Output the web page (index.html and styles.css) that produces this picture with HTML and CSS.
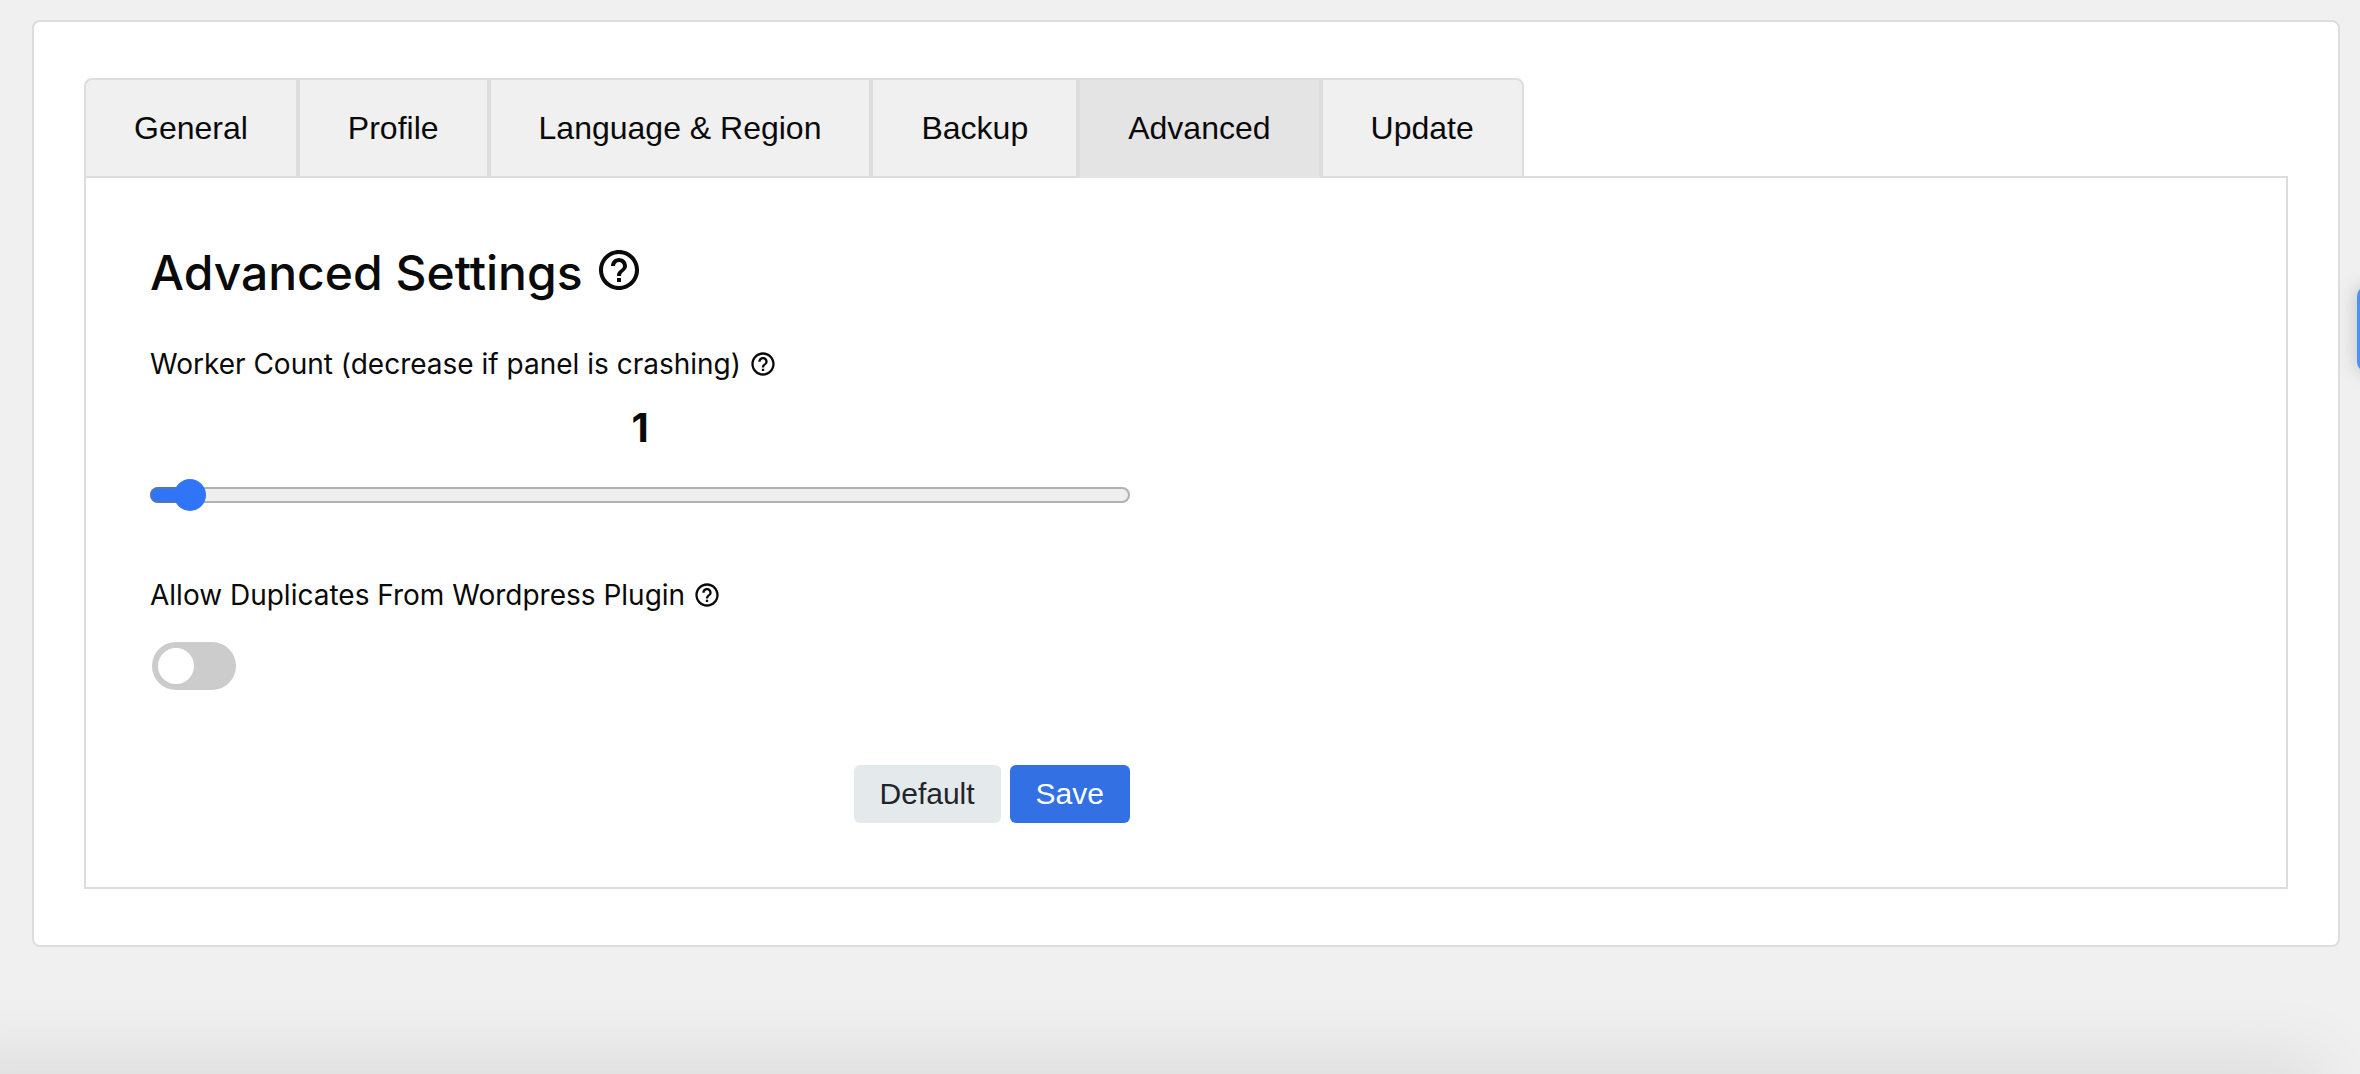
FILE: index.html
```html
<!DOCTYPE html>
<html lang="en">
<head>
<meta charset="utf-8">
<title>Advanced Settings</title>
<link rel="stylesheet" href="styles.css">
</head>
<body>
<svg class="sprite" aria-hidden="true">
  <symbol id="help" viewBox="0 0 24 24">
    <path d="M11 18h2v-2h-2v2zm1-16C6.480 2 2 6.480 2 12s4.480 10 10 10 10-4.480 10-10S17.520 2 12 2zm0 18c-4.410 0-8-3.590-8-8s3.590-8 8-8 8 3.590 8 8-3.590 8-8 8zm0-14c-2.210 0-4 1.790-4 4h2c0-1.100.9-2 2-2s2 .9 2 2c0 2-3 1.750-3 5h2c0-2.250 3-2.500 3-5 0-2.210-1.790-4-4-4z"/>
  </symbol>
</svg>
<main class="card">
  <nav class="tabs">
    <button class="tab" type="button">General</button>
    <button class="tab" type="button">Profile</button>
    <button class="tab" type="button">Language &amp; Region</button>
    <button class="tab" type="button">Backup</button>
    <button class="tab tab-active" type="button">Advanced</button>
    <button class="tab" type="button">Update</button>
  </nav>
  <section class="panel">
    <form class="settings">
      <h1 class="title">Advanced Settings <svg class="help help-large"><use href="#help"/></svg></h1>
      <div class="field">
        <label class="label" for="workers">Worker Count (decrease if panel is crashing) <svg class="help"><use href="#help"/></svg></label>
        <output class="value" for="workers">1</output>
        <input class="slider" id="workers" type="range" min="0" max="40" value="1">
      </div>
      <div class="field field-toggle">
        <label class="label" for="duplicates">Allow Duplicates From Wordpress Plugin <svg class="help"><use href="#help"/></svg></label>
        <input class="toggle" id="duplicates" type="checkbox">
      </div>
      <div class="actions">
        <button class="button" type="button">Default</button>
        <button class="button button-primary" type="submit">Save</button>
      </div>
    </form>
  </section>
</main>
<div class="side-handle"></div>
<div class="bottom-shade"></div>
</body>
</html>
```

FILE: styles.css
```css
* {
  box-sizing: border-box;
}

body {
  margin: 0;
  min-height: 100vh;
  padding: 20px 20px 0 32px;
  background: #f0f0f0;
  color: #0a0a0a;
  font-family: Inter, "Liberation Sans", sans-serif;
  position: relative;
  overflow: hidden;
}

.sprite {
  display: none;
}

.card {
  padding: 56px 50px;
  background: #fff;
  border: 2px solid #ddd;
  border-radius: 8px;
}

.tabs {
  display: flex;
  margin-bottom: -2px;
}

.tab {
  height: 100px;
  padding: 0 48px;
  border: 2px solid #ddd;
  background: #f0f0f0;
  color: #0a0a0a;
  font: 32px "Liberation Sans", Arial, sans-serif;
}

.tab:first-child {
  border-top-left-radius: 8px;
}

.tab:last-child {
  border-top-right-radius: 8px;
}

.tab-active {
  background: #e4e4e4;
  border-bottom-color: #e4e4e4;
  position: relative;
}

.panel {
  border: 2px solid #ddd;
  padding: 63px 64px 64px;
}

.settings {
  max-width: 980px;
}

.title {
  margin: 0;
  font-size: 48px;
  font-weight: 500;
  line-height: 64px;
}

.help {
  width: 28px;
  height: 28px;
  fill: currentColor;
  vertical-align: -4px;
}

.help-large {
  width: 48px;
  height: 48px;
}

.field {
  display: flex;
  flex-direction: column;
  margin-top: 39px;
}

.label {
  font-size: 28px;
  line-height: 40px;
}

.value {
  margin-top: 20px;
  font-size: 40px;
  font-weight: 700;
  line-height: 48px;
  text-align: center;
}

.slider {
  appearance: none;
  width: 100%;
  height: 32px;
  margin: 27px 0 0;
  background: none;
}

.slider::-webkit-slider-runnable-track {
  height: 16px;
  border-radius: 8px;
  background: linear-gradient(to right, #3075f8 40px, #eee 40px);
  box-shadow: inset 0 0 0 2px rgba(118, 118, 118, 0.5);
}

.slider::-webkit-slider-thumb {
  appearance: none;
  width: 32px;
  height: 32px;
  margin-top: -8px;
  border-radius: 50%;
  background: #3075f8;
}

.field-toggle {
  margin-top: 64px;
}

.toggle {
  appearance: none;
  width: 84px;
  height: 48px;
  margin: 27px 2px 0;
  padding: 6px;
  border-radius: 24px;
  background: #ccc;
}

.toggle::before {
  content: "";
  display: block;
  width: 36px;
  height: 36px;
  border-radius: 50%;
  background: #fff;
}

.toggle:checked {
  background: #3270e4;
}

.toggle:checked::before {
  margin-left: 36px;
}

.actions {
  display: flex;
  justify-content: flex-end;
  gap: 9px;
  margin-top: 75px;
}

.button {
  height: 58px;
  padding: 0 26px;
  border: 0;
  border-radius: 6px;
  background: #e4e9eb;
  color: #212529;
  font: 30px "Liberation Sans", Arial, sans-serif;
}

.button-primary {
  background: #3270e4;
  color: #fff;
}

.side-handle {
  position: absolute;
  top: 286px;
  right: -37px;
  width: 40px;
  height: 86px;
  border-radius: 10px;
  background: #4a94ee;
  box-shadow: 0 0 20px rgba(0, 0, 0, 0.2);
}

.bottom-shade {
  position: absolute;
  left: -80px;
  right: 40px;
  bottom: -40px;
  height: 40px;
  box-shadow: 0 0 80px rgba(0, 0, 0, 0.16);
}
```
